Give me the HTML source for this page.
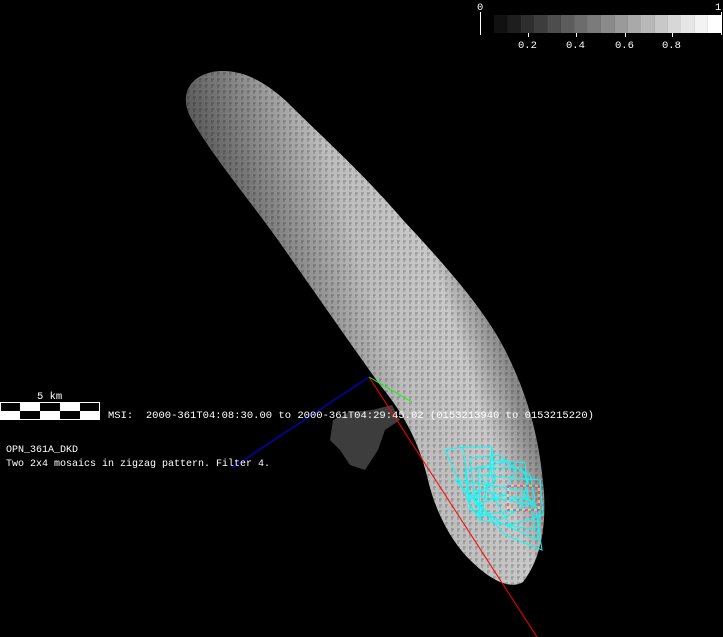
<!DOCTYPE html>
<html><head><meta charset="utf-8"><style>
html,body{margin:0;padding:0;background:#000;width:723px;height:637px;overflow:hidden}
svg{display:block}
text{font-family:"Liberation Mono",monospace;font-size:10.5px;fill:#fff}
</style></head><body>
<svg width="723" height="637" viewBox="0 0 723 637" xmlns="http://www.w3.org/2000/svg">
<defs>
<linearGradient id="g" x1="0.1" y1="0.55" x2="0.75" y2="0.25">
<stop offset="0" stop-color="#3a3a3a"/>
<stop offset="0.3" stop-color="#7a7a7a"/>
<stop offset="0.6" stop-color="#bdbdbd"/>
<stop offset="0.85" stop-color="#c8c8c8"/>
<stop offset="1" stop-color="#8a8a8a"/>
</linearGradient>
<pattern id="p" width="6" height="6" patternUnits="userSpaceOnUse">
<path d="M1 1h3M2 1v3" stroke="#000" stroke-opacity="0.3" stroke-width="1"/>
</pattern>
</defs>
<g>
<rect x="494" y="15" width="13.4" height="18" fill="#111"/>
<rect x="507.3" y="15" width="13.4" height="18" fill="#1e1e1e"/>
<rect x="520.7" y="15" width="13.4" height="18" fill="#2e2e2e"/>
<rect x="534" y="15" width="13.4" height="18" fill="#3d3d3d"/>
<rect x="547.4" y="15" width="13.4" height="18" fill="#4d4d4d"/>
<rect x="560.8" y="15" width="13.4" height="18" fill="#5c5c5c"/>
<rect x="574.1" y="15" width="13.4" height="18" fill="#6c6c6c"/>
<rect x="587.5" y="15" width="13.4" height="18" fill="#7b7b7b"/>
<rect x="600.8" y="15" width="13.4" height="18" fill="#8a8a8a"/>
<rect x="614.2" y="15" width="13.4" height="18" fill="#9a9a9a"/>
<rect x="627.6" y="15" width="13.4" height="18" fill="#a9a9a9"/>
<rect x="640.9" y="15" width="13.4" height="18" fill="#b8b8b8"/>
<rect x="654.3" y="15" width="13.4" height="18" fill="#c8c8c8"/>
<rect x="667.6" y="15" width="13.4" height="18" fill="#d7d7d7"/>
<rect x="681" y="15" width="13.4" height="18" fill="#e6e6e6"/>
<rect x="694.4" y="15" width="13.4" height="18" fill="#f3f3f3"/>
<rect x="707.7" y="15" width="13.3" height="18" fill="#fff"/>
<path d="M480.5 12v23M721.5 12v23M528.5 33v4M576.5 33v4M625.5 33v4M672.5 33v4" stroke="#fff"/>
<text x="477" y="10">0</text><text x="715" y="10">1</text>
<text x="518" y="48">0.2</text><text x="566" y="48">0.4</text><text x="615" y="48">0.6</text><text x="662" y="48">0.8</text>
</g>
<path id="a" d="M212 72 C235 68 258 76 285 100 C320 135 360 170 403 220 C445 265 485 310 505 350 C528 395 540 440 544 493 C546 530 540 560 523 582 C510 590 490 580 470 560 C450 540 435 510 428 480 C420 445 405 415 380 385 C355 350 320 300 285 250 C250 200 215 160 192 120 C180 100 185 78 212 72 Z" fill="url(#g)"/>
<path d="M212 72 C235 68 258 76 285 100 C320 135 360 170 403 220 C445 265 485 310 505 350 C528 395 540 440 544 493 C546 530 540 560 523 582 C510 590 490 580 470 560 C450 540 435 510 428 480 C420 445 405 415 380 385 C355 350 320 300 285 250 C250 200 215 160 192 120 C180 100 185 78 212 72 Z" fill="url(#p)"/>
<path d="M333 420 L350 412 L372 410 L392 405 L400 420 L385 430 L378 450 L365 470 L350 465 L340 450 L330 440 Z" fill="#666" opacity="0.6"/>
<path d="M232 468 L369 377" stroke="#00f"/>
<path d="M369 377 L537 637" stroke="#f00"/>
<path d="M369 377 L412 402" stroke="#0f0"/>
<g fill="none" stroke="#0ff">
<path d="M445 450 L463 447 L492 447 L490 470 L480 520 L470 505 Z"/>
<path d="M463 447 L492 447 L495 480 L470 500 Z"/>
<path d="M470 458 L500 455 L515 470 L505 495 L475 505 Z"/>
<path d="M478 468 L520 468 L528 480 L520 510 L480 515 Z"/>
<path d="M465 470 L505 462 L530 475 L535 500 L500 520 L470 510 Z"/>
<path d="M480 475 L540 480 L543 515 L510 525 Z"/>
<path d="M455 480 L520 490 L540 510 L537 540 L495 520 Z"/>
<path d="M470 495 L535 505 L542 550 L505 535 Z"/>
<path d="M490 460 L525 463 L528 498 L495 500 Z"/>
<path d="M475 490 L530 500 L535 530 L480 520 Z"/>
</g>
<rect x="508" y="486" width="31" height="24" fill="none" stroke="#f0f" stroke-dasharray="3,3"/>
<rect x="508" y="486" width="31" height="24" fill="none" stroke="#ff0" stroke-dasharray="3,3" stroke-dashoffset="3"/>
<rect x="0.5" y="402.5" width="99" height="17" fill="#fff" stroke="#fff"/>
<rect x="1" y="403" width="19" height="8" fill="#000"/>
<rect x="40" y="403" width="20" height="8" fill="#000"/>
<rect x="80" y="403" width="19" height="8" fill="#000"/>
<rect x="20" y="411" width="20" height="8" fill="#000"/>
<rect x="60" y="411" width="20" height="8" fill="#000"/>
<text x="37" y="399">5 km</text>
<text x="108" y="418" textLength="486" lengthAdjust="spacingAndGlyphs" xml:space="preserve">MSI:  2000-361T04:08:30.00 to 2000-361T04:29:45.02 (0153213940 to 0153215220)</text>
<text x="6" y="452" textLength="72" lengthAdjust="spacingAndGlyphs">OPN_361A_DKD</text>
<text x="6" y="466" textLength="264" lengthAdjust="spacingAndGlyphs">Two 2x4 mosaics in zigzag pattern. Filter 4.</text>
</svg>
</body></html>
